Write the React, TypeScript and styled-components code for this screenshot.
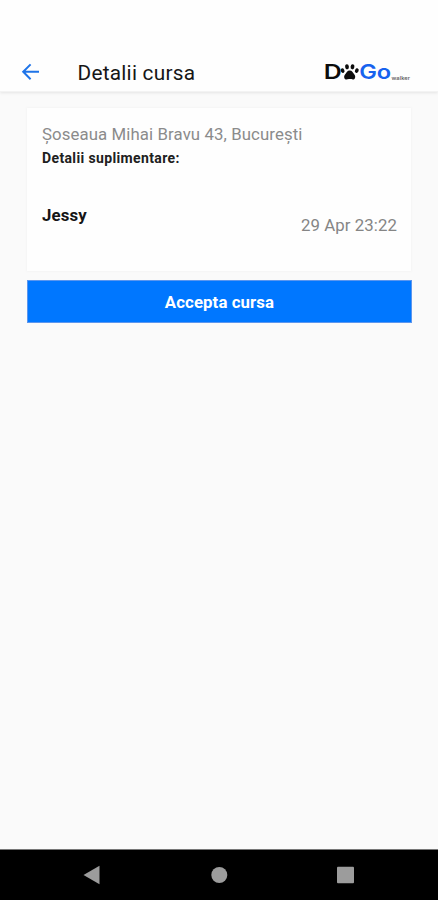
import React from "react";
import styled, { createGlobalStyle } from "styled-components";

const GlobalStyle = createGlobalStyle`
  * { box-sizing: border-box; }
  body { margin: 0; background: #fafafa; font-family: Roboto, sans-serif; }
`;

const Screen = styled.div`
  display: flex;
  flex-direction: column;
  height: 900px;
  width: 100%;
  background: #fafafa;
`;

const Header = styled.header`
  display: flex;
  align-items: center;
  height: 92px;
  padding: 52px 27px 0 20px;
  background: #fefefe;
  border-bottom: 1px solid #f3f3f3;
  box-shadow: 0 1px 3px rgba(0, 0, 0, 0.09);
`;

const BackButton = styled.button`
  display: flex;
  padding: 0;
  border: 0;
  background: none;
`;

const Title = styled.h1`
  flex: 1;
  margin: 2px 0 0 36.5px;
  color: #161616;
  font-size: 20.8px;
  font-weight: 400;
  line-height: 24px;
  letter-spacing: 0.25px;
`;

const Logo = styled.svg`
  display: block;
  font-family: Inter, sans-serif;
`;

const Content = styled.main`
  flex: 1;
  display: flex;
  flex-direction: column;
  gap: 9px;
  padding: 16px 26px 0 27px;
`;

const Card = styled.section`
  display: flex;
  flex-direction: column;
  height: 163px;
  margin-right: 1px;
  padding: 16px 14px 0 15px;
  background: #fefefe;
  box-shadow: 0 0 2px 1px rgba(0, 0, 0, 0.022);
`;

const Address = styled.p`
  margin: 0;
  color: #8b8b8b;
  font-size: 16.8px;
  line-height: 20px;
  letter-spacing: 0.1px;
`;

const Label = styled.p`
  margin: 6px 0 0;
  color: #202020;
  font-size: 14px;
  font-weight: 700;
  line-height: 17px;
  letter-spacing: 0.37px;
`;

const RideRow = styled.div`
  display: flex;
  justify-content: space-between;
  margin-top: 38px;
`;

const DogName = styled.strong`
  color: #151515;
  font-size: 16.8px;
  font-weight: 700;
  line-height: 20px;
  letter-spacing: 0.15px;
`;

const RideDate = styled.time`
  margin-top: 10px;
  color: #858585;
  font-size: 16.8px;
  line-height: 20px;
  letter-spacing: 0.08px;
`;

const AcceptButton = styled.button`
  height: 43px;
  padding: 0;
  border: 1px solid #5c96ee;
  background: #0077ff;
  color: #fff;
  font: 700 16.8px/20px Roboto, sans-serif;
  letter-spacing: 0.1px;
`;

const NavBar = styled.nav`
  display: flex;
  height: 51px;
  border-top: 1px solid #777;
  background: #000;
`;

export default function App() {
  return (
    <>
      <GlobalStyle />
      <Screen>
        <Header>
          <BackButton aria-label="Back">
            <svg width="21" height="20" viewBox="0 0 21 20" fill="none" stroke="#1f74e8" strokeWidth="2">
              <path d="M19 9.8H3M10.6 2.4L3.2 9.8l7.4 7.4" />
            </svg>
          </BackButton>
          <Title>Detalii cursa</Title>
          <Logo width="87" height="24" viewBox="0 0 87 24" role="img" aria-label="DoGo walker">
            <text x="-0.3" y="19.4" fontSize="20.3" fontWeight="600" fill="#0c0c0c" textLength="18" lengthAdjust="spacingAndGlyphs">D</text>
            <g fill="#0c0c0c">
              <ellipse cx="18.6" cy="10.6" rx="1.8" ry="2.3" transform="rotate(-28 18.6 10.6)" />
              <ellipse cx="23" cy="6.8" rx="1.9" ry="2.6" transform="rotate(-8 23 6.8)" />
              <ellipse cx="28.5" cy="6.8" rx="1.9" ry="2.6" transform="rotate(8 28.5 6.8)" />
              <ellipse cx="32.8" cy="10.6" rx="1.8" ry="2.3" transform="rotate(28 32.8 10.6)" />
              <path d="M25.7 10.5c2.5 0 3.1 2.2 4.5 3.7 1.6 1.5 1.3 5-.7 5.200-1.500.2-2.200-.4-3.800-.4s-2.300.6-3.800.4c-2-.2-2.300-3.700-.7-5.200 1.400-1.500 2-3.700 4.500-3.700z" />
            </g>
            <text x="35.200" y="19.400" fontSize="20.300" fontWeight="600" fill="#1762ee" textLength="32" lengthAdjust="spacingAndGlyphs">Go</text>
            <text x="67.500" y="19.600" fontSize="5" fontWeight="500" fill="#555" textLength="18.500" lengthAdjust="spacingAndGlyphs">walker</text>
          </Logo>
        </Header>
        <Content>
          <Card>
            <Address>Șoseaua Mihai Bravu 43, București</Address>
            <Label>Detalii suplimentare:</Label>
            <RideRow>
              <DogName>Jessy</DogName>
              <RideDate>29 Apr 23:22</RideDate>
            </RideRow>
          </Card>
          <AcceptButton>Accepta cursa</AcceptButton>
        </Content>
        <NavBar>
          <svg width="438" height="50" viewBox="0 0 438 50" fill="#9c9c9c">
            <path d="M83.5 25L99.5 15.8V34.2Z" />
            <circle cx="219.3" cy="25" r="8" />
            <rect x="337" y="16.7" width="17" height="16.5" rx="1" />
          </svg>
        </NavBar>
      </Screen>
    </>
  );
}
